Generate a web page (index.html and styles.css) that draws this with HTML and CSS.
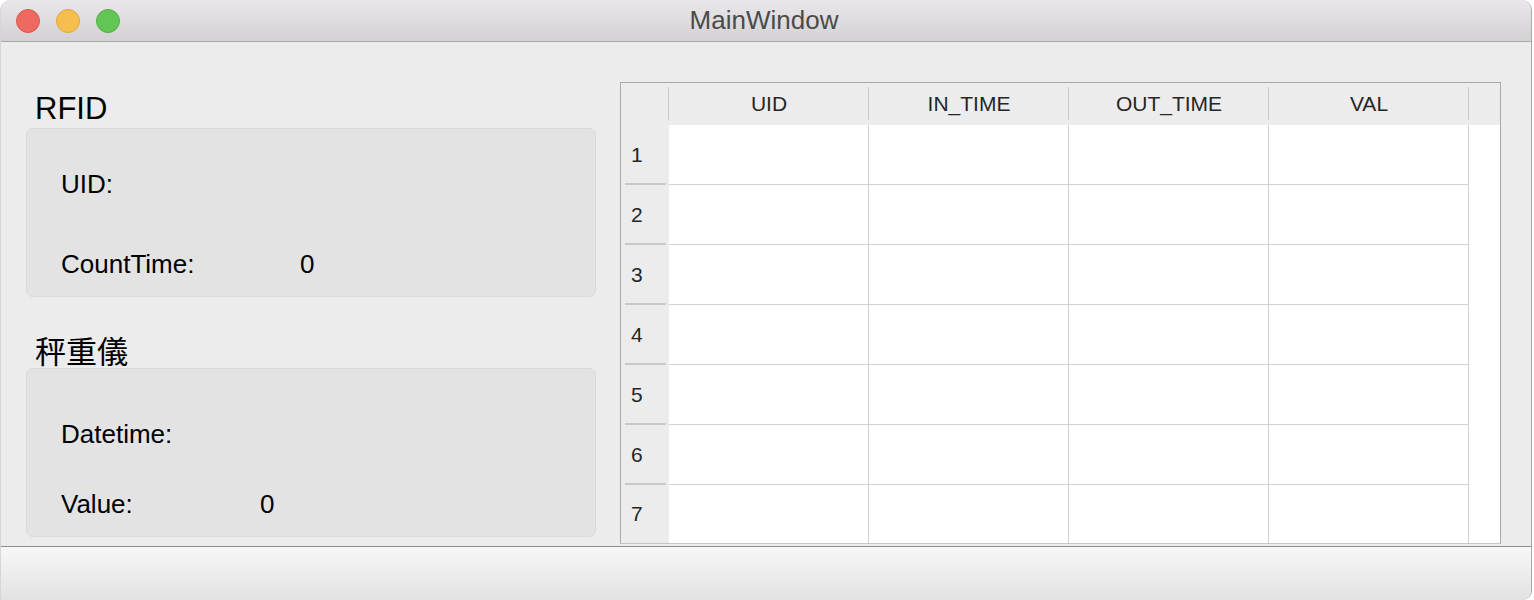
FILE: index.html
```html
<!DOCTYPE html>
<html>
<head>
<meta charset="utf-8">
<title>MainWindow</title>
<link rel="stylesheet" href="styles.css">
</head>
<body>
<div class="window">
  <div class="titlebar">
    <div class="lights">
      <span class="light light-close"></span>
      <span class="light light-min"></span>
      <span class="light light-max"></span>
    </div>
    <div class="title">MainWindow</div>
    <div></div>
  </div>
  <div class="main">
    <div class="left">
      <div class="group-title">RFID</div>
      <div class="box box-rfid">
        <div class="row"><span class="key">UID:</span><span class="val"></span></div>
        <div class="row"><span class="key">CountTime:</span><span class="val">0</span></div>
      </div>
      <div class="group-title group-title-2">秤重儀</div>
      <div class="box box-scale">
        <div class="row"><span class="key">Datetime:</span><span class="val"></span></div>
        <div class="row"><span class="key">Value:</span><span class="val">0</span></div>
      </div>
    </div>
    <div class="table">
      <div class="th th-corner"></div>
      <div class="th">UID</div>
      <div class="th">IN_TIME</div>
      <div class="th">OUT_TIME</div>
      <div class="th">VAL</div>
      <div class="th th-fill"></div>

      <div class="rh">1</div><div class="td"></div><div class="td"></div><div class="td"></div><div class="td"></div><div class="fill"></div>
      <div class="rh">2</div><div class="td"></div><div class="td"></div><div class="td"></div><div class="td"></div><div class="fill"></div>
      <div class="rh">3</div><div class="td"></div><div class="td"></div><div class="td"></div><div class="td"></div><div class="fill"></div>
      <div class="rh">4</div><div class="td"></div><div class="td"></div><div class="td"></div><div class="td"></div><div class="fill"></div>
      <div class="rh">5</div><div class="td"></div><div class="td"></div><div class="td"></div><div class="td"></div><div class="fill"></div>
      <div class="rh">6</div><div class="td"></div><div class="td"></div><div class="td"></div><div class="td"></div><div class="fill"></div>
      <div class="rh rh-last">7</div><div class="td td-last"></div><div class="td td-last"></div><div class="td td-last"></div><div class="td td-last"></div><div class="fill"></div>
    </div>
  </div>
  <div class="statusbar"></div>
</div>
</body>
</html>
```

FILE: styles.css
```css
* { box-sizing: border-box; }

html, body {
  margin: 0;
  padding: 0;
  background: #ffffff;
}

body {
  font-family: "Liberation Sans", "Noto Sans CJK TC", sans-serif;
  color: #000;
}

.window {
  width: 1532px;
  height: 600px;
  display: flex;
  flex-direction: column;
  background: #ececec;
  border-left: 1px solid #d6d6d6;
  border-right: 1px solid #a9a9a9;
  border-radius: 10px 10px 9px 0;
  overflow: hidden;
}

.titlebar {
  height: 42px;
  flex: none;
  display: grid;
  grid-template-columns: 1fr auto 1fr;
  align-items: center;
  background: linear-gradient(#e9e7e9, #d3d1d3);
  border-bottom: 1px solid #a8a8a8;
}

.lights {
  display: flex;
  gap: 16px;
  padding-left: 15px;
  align-items: center;
}

.light {
  width: 24px;
  height: 24px;
  border-radius: 50%;
  display: block;
}
.light-close { background: #ee6a5f; border: 1px solid #d9594e; }
.light-min { background: #f6be4f; border: 1px solid #dea540; }
.light-max { background: #62c655; border: 1px solid #53ad46; }

.title {
  font-size: 26px;
  line-height: 41px;
  color: #4b4b4b;
  padding-right: 4px;
}

.main {
  height: 504px;
  flex: none;
  display: flex;
  gap: 24px;
  padding-left: 25px;
}

.left {
  width: 570px;
  display: flex;
  flex-direction: column;
}

.group-title {
  height: 86px;
  padding: 49px 0 0 9px;
  font-size: 31px;
  line-height: 36px;
}

.group-title-2 {
  height: 71px;
  padding-top: 38px;
}

.box {
  height: 169px;
  background: #e3e3e3;
  border: 1px solid #d9d9d9;
  border-radius: 7px;
  display: flex;
  flex-direction: column;
  justify-content: space-between;
  padding: 40px 0 17px 34px;
}

.box-scale { padding-top: 50px; }

.row {
  display: flex;
  font-size: 26px;
  line-height: 30px;
  height: 30px;
}

.box-rfid .key { width: 239px; }
.box-scale .key { width: 199px; }

.table {
  margin-top: 40px;
  width: 881px;
  height: 462px;
  display: grid;
  grid-template-columns: 48px repeat(4, 200px) 31px;
  grid-template-rows: 42px repeat(6, 60px) 58px;
  background: #ffffff;
  border: 1px solid #a9a9a9;
  border-bottom-color: #c6c6c6;
  font-size: 21px;
  color: #262626;
}

.th {
  position: relative;
  background: #ececec;
  display: flex;
  align-items: center;
  justify-content: center;
}

.th::after {
  content: "";
  position: absolute;
  right: -1px;
  top: 4px;
  bottom: 5px;
  width: 2px;
  background: #c8c8c8;
}

.th-fill::after { display: none; }

.rh {
  position: relative;
  background: #ececec;
  display: flex;
  align-items: center;
  padding-left: 10px;
}

.rh::after {
  content: "";
  position: absolute;
  left: 4px;
  right: 3px;
  bottom: 0;
  height: 2px;
  background: #c8c8c8;
}

.rh-last::after { display: none; }

.td {
  border-right: 1px solid #d2d2d2;
  border-bottom: 1px solid #d2d2d2;
}

.td-last { border-bottom: none; }

.fill { background: #ffffff; }

.statusbar {
  flex: 1;
  border-top: 1px solid #8e8e8e;
  background: linear-gradient(#f7f7f7, #e2e2e2);
}
```
